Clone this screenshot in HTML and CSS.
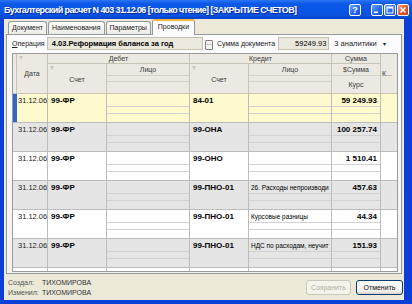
FILE: index.html
```html
<!DOCTYPE html>
<html lang="ru">
<head>
  <meta charset="UTF-8">
  <meta name="viewport" content="width=device-width, initial-scale=1.0">
  <title>Бухгалтерский расчет N 403</title>
  <link rel="stylesheet" href="styles.css">
</head>
<body>
  <div class="window">
    <div class="titlebar">
      <span class="title">Бухгалтерский расчет N 403 31.12.06 [только чтение] [ЗАКРЫТИЕ СЧЕТОВ]</span>
      <div class="caption-btns">
        <span class="cbtn help">?</span>
        <span class="cbtn"><svg width="8" height="8" viewBox="0 0 8 8"><rect x="1" y="5.5" width="4" height="1.5" fill="#fff"/></svg></span>
        <span class="cbtn"><svg width="8" height="8" viewBox="0 0 8 8"><rect x="1" y="1" width="6" height="6" fill="none" stroke="#fff" stroke-width="1"/><rect x="1" y="1" width="6" height="1.5" fill="#fff"/></svg></span>
        <span class="cbtn close"><svg width="8" height="8" viewBox="0 0 8 8"><path d="M1.5 1.5l5 5M6.5 1.5l-5 5" stroke="#fff" stroke-width="1.6"/></svg></span>
      </div>
    </div>

    <div class="client">
      <div class="tabs">
        <span class="tab">Документ</span>
        <span class="tab">Наименования</span>
        <span class="tab">Параметры</span>
        <span class="tab active">Проводки</span>
      </div>

      <div class="panel">
        <div class="op-row">
          <span class="label op-label"><u>О</u>перация</span>
          <span class="field op">4.03.Реформация баланса за год</span>
          <span class="dots">...</span>
          <span class="label sum-label">Сумма документа</span>
          <span class="field sum">59249.93</span>
          <span class="analit">3 аналитики <span class="arrow">&#9662;</span></span>
        </div>

        <div class="grid">
          <div class="ghead">
            <div class="h h-mark"></div>
            <div class="h h-date"><i class="flt"></i>Дата</div>
            <div class="h h-debet">Дебет</div>
            <div class="h h-kredit">Кредит</div>
            <div class="h h-sum">Сумма</div>
            <div class="h h-k">К...</div>
            <div class="h h-dschet"><i class="flt"></i>Счет</div>
            <div class="h h-dlico lico"><span class="sub">Лицо</span><span class="sub"></span><span class="sub"></span></div>
            <div class="h h-kschet"><i class="flt"></i>Счет</div>
            <div class="h h-klico lico"><span class="sub">Лицо</span><span class="sub"></span><span class="sub"></span></div>
            <div class="h h-sum2 lico"><span class="sub">$Сумма</span><span class="sub kurs">Курс</span></div>
          </div>
          <div id="rows"></div>
        </div>
      </div>

      <div class="footer">
        <div class="who">
          <div class="who-line"><span class="lbl">Создал:</span><span>ТИХОМИРОВА</span></div>
          <div class="who-line"><span class="lbl">Изменил:</span><span>ТИХОМИРОВА</span></div>
        </div>
        <div class="buttons">
          <span class="btn disabled">Сохранить</span>
          <span class="btn">Отменить</span>
        </div>
      </div>
    </div>
  </div>

  <script>
    const entries = [
      ["31.12.06", "99-ФР", "84-01", "", "59 249.93"],
      ["31.12.06", "99-ФР", "99-ОНА", "", "100 257.74"],
      ["31.12.06", "99-ФР", "99-ОНО", "", "1 510.41"],
      ["31.12.06", "99-ФР", "99-ПНО-01", "26. Расходы непроизводи", "457.63"],
      ["31.12.06", "99-ФР", "99-ПНО-01", "Курсовые разницы", "44.34"],
      ["31.12.06", "99-ФР", "99-ПНО-01", "НДС по расходам, неучит", "151.93"],
      ["", "", "", "", ""]
    ];

    function stack(first, cls) {
      return `<div class="c ${cls}"><span class="sub">${first}</span><span class="sub"></span><span class="sub"></span></div>`;
    }

    const rows = document.getElementById("rows");
    entries.forEach((e, index) => {
      const row = document.createElement("div");
      row.className = "grow " + (index === 0 ? "sel" : index % 2 ? "grey" : "white");
      row.innerHTML = `<div class="c mark"></div>
        <div class="c date">${e[0]}</div>
        <div class="c acct">${e[1]}</div>
        ${stack("", "lico")}
        <div class="c acct">${e[2]}</div>
        ${stack(e[3], "lico")}
        ${stack(e[4], "lico sum")}
        <div class="c k"></div>`;
      rows.appendChild(row);
    });
  </script>
</body>
</html>
```

FILE: styles.css
```css
* {
  box-sizing: border-box;
}

body {
  margin: 0;
  width: 412px;
  height: 304px;
  overflow: hidden;
  background: #0c3ed8;
  font-family: "Liberation Sans", Arial, sans-serif;
  font-size: 7px;
  color: #000;
}

.window {
  display: flex;
  flex-direction: column;
  height: 304px;
}

/* title bar */
.titlebar {
  height: 19px;
  flex: none;
  display: flex;
  align-items: center;
  justify-content: space-between;
  padding: 0 3px 0 4px;
  background: linear-gradient(#2a74f5, #0b58e8 20%, #0a55e6 60%, #0850de 85%, #0640c8);
  color: #fff;
}

.title {
  font-size: 9px;
  font-weight: bold;
  letter-spacing: -0.6px;
  white-space: nowrap;
  text-shadow: 1px 1px #0a2a9c;
}

.caption-btns {
  display: flex;
  gap: 1px;
}

.cbtn {
  width: 12px;
  height: 12px;
  border: 1px solid #fff;
  border-radius: 2px;
  background: linear-gradient(135deg, #6aa6ff, #2a6af0 55%, #1450d6);
  display: flex;
  align-items: center;
  justify-content: center;
}

.cbtn.help {
  margin-right: 9px;
  font-size: 9px;
  font-weight: bold;
  color: #fff;
}

.cbtn.close {
  background: linear-gradient(135deg, #f4a284, #e2552f 55%, #c73c1a);
}

/* client area */
.client {
  flex: 1;
  display: flex;
  flex-direction: column;
  margin: 0 8px 4px 4px;
  background: #ece9d8;
}

.tabs {
  height: 15px;
  flex: none;
  display: flex;
  align-items: flex-end;
  padding-left: 4px;
  gap: 1px;
  position: relative;
  z-index: 1;
}

.tab {
  height: 13px;
  padding: 0 3px;
  line-height: 12px;
  border: 1px solid #919b9c;
  border-bottom: none;
  border-radius: 3px 3px 0 0;
  background: linear-gradient(#fefefe, #ecebe5);
  color: #222;
}

.tab.active {
  height: 16px;
  margin-bottom: -1px;
  padding: 0 5px;
  line-height: 12px;
  border-top: 2px solid #f7b53c;
  background: #fcfcfe;
}

.panel {
  flex: none;
  margin: 0 2px;
  padding: 2px 3px 1px 5px;
  border: 1px solid #919b9c;
  background: linear-gradient(#fcfcfe, #f4f3ee);
}

.op-row {
  height: 13px;
  display: flex;
  align-items: center;
}

.label {
  color: #222;
}

.op-label {
  width: 35px;
}

.field {
  height: 13px;
  line-height: 11px;
  border: 1px solid #c4c1b3;
  background: #ebe9de;
}

.field.op {
  width: 157px;
  padding-left: 4px;
  font-size: 7.5px;
  font-weight: bold;
}

.dots {
  width: 8px;
  height: 10px;
  margin: 3px 0 0 2px;
  border: 1px solid #7f7f7f;
  border-radius: 1px;
  background: #f4f3ee;
  line-height: 5px;
  text-align: center;
  font-size: 6px;
}

.sum-label {
  width: 61px;
  margin-left: 4px;
}

.field.sum {
  width: 52px;
  padding-right: 2px;
  text-align: right;
  font-size: 7.5px;
}

.analit {
  margin-left: 3px;
  padding-left: 2px;
  width: 66px;
  color: #222;
  font-size: 7.5px;
}

.analit .arrow {
  margin-left: 4px;
  font-size: 6px;
}

/* grid */
.grid {
  margin-top: 3px;
  width: 386px;
  height: 219px;
  overflow: hidden;
  border: 1px solid #9a9a9a;
  background: #fff;
  --cols: 4px 31px 59px 83px 59px 83px 49px 16px;
}

.ghead {
  display: grid;
  grid-template-columns: var(--cols);
  grid-template-rows: 10px 30px;
  background: #ebe9e1;
  color: #3a3a3a;
}

.h {
  position: relative;
  border-right: 1px solid #c7c4b6;
  border-bottom: 1px solid #c7c4b6;
  display: flex;
  align-items: center;
  justify-content: center;
  white-space: nowrap;
}

.h-mark { grid-column: 1; grid-row: 1 / 3; }
.h-date { grid-column: 2; grid-row: 1 / 3; }
.h-debet { grid-column: 3 / 5; grid-row: 1; }
.h-kredit { grid-column: 5 / 7; grid-row: 1; }
.h-sum { grid-column: 7; grid-row: 1; }
.h-k { grid-column: 8; grid-row: 1 / 3; justify-content: flex-start; padding-left: 1px; border-right: none; }
.h-dschet { grid-column: 3; grid-row: 2; padding-top: 1px; }
.h-dlico { grid-column: 4; grid-row: 2; }
.h-kschet { grid-column: 5; grid-row: 2; padding-top: 1px; }
.h-klico { grid-column: 6; grid-row: 2; }
.h-sum2 { grid-column: 7; grid-row: 2; }

.h.lico {
  flex-direction: column;
  align-items: stretch;
  justify-content: flex-start;
}

.h.lico .sub {
  text-align: center;
  border-bottom: 1px solid #d6d3c6;
}

.h.lico .sub:nth-child(1) { height: 12px; line-height: 11px; }
.h.lico .sub:nth-child(2) { height: 6px; }
.h.lico .sub:nth-child(3) { flex: 1; border-bottom: none; }
.h-sum2 .sub.kurs { flex: 1; height: auto; line-height: 17px; border-bottom: none; }

.flt {
  position: absolute;
  left: 2px;
  top: 2px;
  width: 0;
  height: 0;
  border-left: 2.5px solid transparent;
  border-right: 2.5px solid transparent;
  border-top: 4px solid #c9c7bd;
}

.grow {
  display: grid;
  grid-template-columns: var(--cols);
  height: 29px;
}

.grow.sel { background: #fdfacd; }
.grow.grey { background: #e5e5e5; }
.grow.white { background: #fff; }

.c {
  border-right: 1px solid #bcbcbc;
  border-bottom: 1px solid #bcbcbc;
  overflow: hidden;
  white-space: nowrap;
  line-height: 11px;
}

.c.mark {
  border-right: none;
}

.grow.sel .c.mark {
  background: #3366c8;
}

.c.date {
  padding: 1px 0 0 1px;
  font-size: 7.5px;
  color: #222;
}

.c.acct {
  padding: 1px 0 0 3px;
  font-size: 8px;
  font-weight: bold;
}

.c.lico {
  display: flex;
  flex-direction: column;
}

.c.lico .sub {
  border-bottom: 1px solid #d2d2d2;
  padding: 1px 0 0 2px;
  overflow: hidden;
}

.c.lico .sub:nth-child(1) { height: 13px; font-size: 6.5px; }
.c.lico .sub:nth-child(2) { height: 7px; }
.c.lico .sub:nth-child(3) { flex: 1; border-bottom: none; }

.c.sum .sub:nth-child(1) {
  text-align: right;
  padding-right: 3px;
  font-size: 8px;
  font-weight: bold;
}

.c.k {
  border-right: none;
}

/* footer */
.footer {
  flex: 1;
  display: flex;
  justify-content: space-between;
  padding: 4px 1px 0 4px;
}

.who-line {
  height: 10px;
  line-height: 10px;
  color: #333;
}

.who-line .lbl {
  display: inline-block;
  width: 34px;
  color: #555;
}

.buttons {
  display: flex;
  gap: 5px;
  margin-top: 2px;
}

.btn {
  height: 15px;
  line-height: 13px;
  text-align: center;
  border: 1px solid #003c74;
  border-radius: 3px;
  background: linear-gradient(#ffffff, #f0f0ea 80%, #d6d0c5);
  color: #111;
}

.btn.disabled {
  width: 45px;
  border-color: #c9c7ba;
  background: #f5f4ea;
  color: #b0ad9f;
}

.btn:last-child {
  width: 47px;
}
```
